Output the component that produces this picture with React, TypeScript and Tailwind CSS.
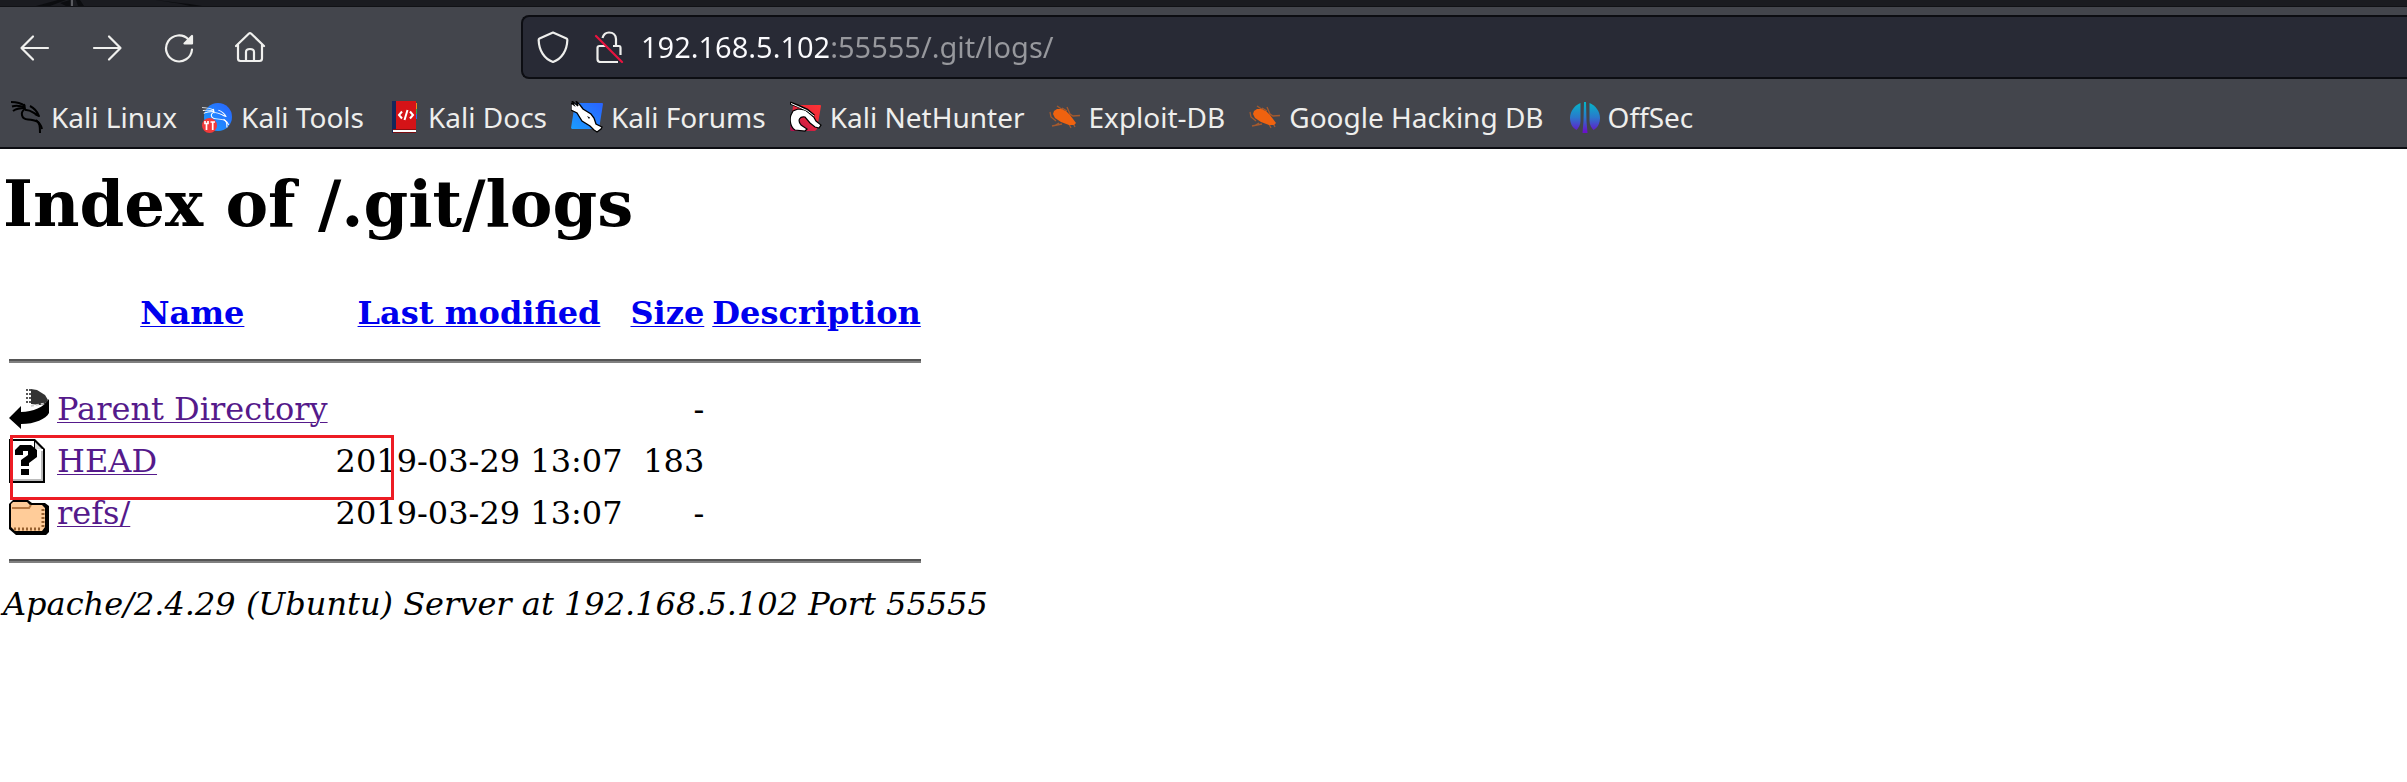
import type { ReactNode } from "react";

const DragonPaths = ({ width = 1.8 }: { width?: number }) => (
  <g fill="none" stroke="currentColor" strokeWidth={width} strokeLinejoin="round">
    <path d="M0 1 C6 1 10 2 14 5" />
    <path d="M1 5.500 C6 4 10 5 14 6.500" />
    <path d="M2 10 C6 7 9 7 14 7" />
    <path d="M13 3 L14 8 C9 11 10 18 17 18.500 C24 19 29 20 31 28" />
    <path d="M14 9 C19 8 22 12 27 14" />
    <path d="M19 5 C23 7 26 10 28 15 L24 13" />
    <path d="M25 19 C29 22 29 26 29 32" />
  </g>
);

const KaliLinuxIcon = () => (
  <svg viewBox="0 0 32 32" className="size-8 text-black" aria-hidden="true">
    <DragonPaths width={2} />
  </svg>
);

const KaliToolsIcon = () => (
  <svg viewBox="0 0 32 32" className="size-8 text-white" aria-hidden="true">
    <defs>
      <linearGradient id="tools" x1="0" y1="1" x2="1" y2="0">
        <stop offset="0" stopColor="#1aa0ff" />
        <stop offset="1" stopColor="#2a62ff" />
      </linearGradient>
    </defs>
    <circle cx="17" cy="16" r="14" fill="url(#tools)" />
    <g transform="translate(1 6) scale(0.86 0.64)">
      <DragonPaths width={1.3} />
    </g>
    <circle cx="8.500" cy="24.500" r="7.500" fill="#f23a3a" />
    <path d="M4 20v2.500h1.500V29M7 20v2.500H5.500M9.500 21H14M11.700 21v8" fill="none" stroke="#fff" strokeWidth="1.700" />
  </svg>
);

const KaliDocsIcon = () => (
  <svg viewBox="0 0 32 32" className="size-8" aria-hidden="true">
    <path d="M4 0h4v32H4z" fill="#14275a" />
    <path d="M8 0h20v28H8z" fill="#d51317" />
    <path d="M28 2h1v6h-1z" fill="#f08a1c" />
    <path d="M28 8h1v5h-1z" fill="#2fa84f" />
    <path d="M28 13h1v5h-1z" fill="#2b6be0" />
    <path d="M5 28h23v1H5z" fill="#8c0d10" />
    <path d="M5 29h23v2H5z" fill="#fff" />
    <path d="M5 31h23v1H5z" fill="#7d0c10" />
    <path d="M14 10.500 L11 14 L14 17.500 M22 10.500 L25 14 L22 17.500 M19.500 9 L16.500 19" fill="none" stroke="#fff" strokeWidth="2" />
  </svg>
);

const KaliForumsIcon = () => (
  <svg viewBox="0 0 32 32" className="size-8" aria-hidden="true">
    <defs>
      <linearGradient id="forums" x1="0" y1="1" x2="1" y2="0">
        <stop offset="0" stopColor="#1a9dff" />
        <stop offset="1" stopColor="#2a62ff" />
      </linearGradient>
    </defs>
    <path d="M4 2 H31 a1 1 0 0 1 1 1 L28 28 H1 L0 27 Z" fill="url(#forums)" />
    <path
      d="M0 2 L3 4 L1 0 L7 5 L5 0 L9 4 L12 8 L20 13 L23 17 L25 23 L31 26 L30 28 L26 31 L23 29 L19 25 L11 20 L6 12 L0 9 Z"
      fill="#fff"
      stroke="#000"
      strokeWidth="1.300"
    />
    <path d="M16 15 L19 16.500 L18 18 Z" fill="#000" />
  </svg>
);

const KaliNetHunterIcon = () => (
  <svg viewBox="0 0 32 32" className="size-8" aria-hidden="true">
    <defs>
      <linearGradient id="hunter" x1="0" y1="1" x2="1" y2="0">
        <stop offset="0" stopColor="#a8104e" />
        <stop offset="0.600" stopColor="#ee2a3a" />
        <stop offset="1" stopColor="#ff3333" />
      </linearGradient>
    </defs>
    <path d="M5 4 H30 a1 1 0 0 1 1 1 L27 28 L25 30 H1 L0 29 L3 5 Z" fill="url(#hunter)" />
    <path
      d="M5 29 C-1 25 0 16 1 14 L3 10 L8 8 L15 9 L22 13 L26 20 L31 24 L29 27 L25 26 L20 22 L15 16 C10 15 7 19 11 24 L17 28 L15 30 Z"
      fill="#fff"
      stroke="#000"
      strokeWidth="1.200"
    />
    <path d="M0 2 L8 5 L17 9 L24 15" fill="none" stroke="#000" strokeWidth="3" />
    <path d="M1 2.500 L8 5.500 L17 9.500 L24 15" fill="none" stroke="#fff" strokeWidth="1" />
  </svg>
);

const ExploitIcon = () => (
  <svg viewBox="0 0 32 32" className="size-8" aria-hidden="true">
    <path
      d="M8 5 L14 9 M13 7 L18 10 M18 6 L21 13 L24 15 L31 14.500 M1 11 L2 16 L7 20 M3 25 L13 23 M10 22 L5 25 M20 23 L22 27 M24 22 L26 26"
      fill="none"
      stroke="#a3592e"
      strokeWidth="1.300"
    />
    <path d="M5 10 L8 8 H12 L17 10 L21 14 L24 18 L27 22 L25 24 L20 24 L12 21 L6 17 L4 13 Z" fill="#f0620f" />
  </svg>
);

const OffSecIcon = () => (
  <svg viewBox="0 0 32 32" className="size-8" aria-hidden="true">
    <defs>
      <linearGradient id="offsec" gradientUnits="userSpaceOnUse" x1="0" y1="2" x2="0" y2="31">
        <stop offset="0" stopColor="#06b4c8" />
        <stop offset="0.500" stopColor="#2a78cc" />
        <stop offset="1" stopColor="#6a10cc" />
      </linearGradient>
    </defs>
    <g fill="url(#offsec)">
      <path d="M12.500 2 V20 C12.500 24 10.500 27 8.500 29 C4.500 27 2 22 2 17 C2 10 7 4 12.500 2 Z" />
      <path d="M21.500 2 V20 C21.500 24 23.500 27 25.500 29 C29.500 27 32 22 32 17 C32 10 27 4 21.500 2 Z" />
      <path d="M16 1 H18 L18.500 20 L19.500 32 H14.500 L15.500 20 Z" />
    </g>
  </svg>
);

const bookmarks: { label: string; icon: ReactNode }[] = [
  { label: "Kali Linux", icon: <KaliLinuxIcon /> },
  { label: "Kali Tools", icon: <KaliToolsIcon /> },
  { label: "Kali Docs", icon: <KaliDocsIcon /> },
  { label: "Kali Forums", icon: <KaliForumsIcon /> },
  { label: "Kali NetHunter", icon: <KaliNetHunterIcon /> },
  { label: "Exploit-DB", icon: <ExploitIcon /> },
  { label: "Google Hacking DB", icon: <ExploitIcon /> },
  { label: "OffSec", icon: <OffSecIcon /> },
];

const NavButton = ({ label, children }: { label: string; children: ReactNode }) => (
  <button type="button" aria-label={label} className="size-8 text-[#f0f0ee]">
    <svg
      viewBox="0 0 32 32"
      className="size-8"
      fill="none"
      stroke="currentColor"
      strokeWidth="2.200"
      strokeLinecap="round"
      strokeLinejoin="round"
      aria-hidden="true"
    >
      {children}
    </svg>
  </button>
);

const BackArrowIcon = () => (
  <svg viewBox="0 0 40 44" className="block h-11 w-10" role="img" aria-label="[PARENTDIR]">
    <path d="M22 2 L28 3 L36 8 L39 13 L37 17 L31 18 L22 17 Z" fill="#333" />
    <path d="M17 3 H23 M17 7 H23 M17 11 H23 M17 15 H23" stroke="#555" strokeWidth="2" strokeDasharray="2 1" />
    <path d="M22 19 L37 16" stroke="#ccc" strokeWidth="1.500" strokeDasharray="3 2" />
    <path d="M0 31 L12 19 V25 C24 25 35 20 40 12 V26 C37 32 26 37 12 37 V42 Z" fill="#000" />
  </svg>
);

const UnknownFileIcon = () => (
  <svg viewBox="0 0 40 44" className="block h-11 w-10" role="img" aria-label="[   ]">
    <path d="M0 0 H26 L36 10 V44 H0 Z" fill="#000" />
    <path d="M2 2 H25 V10 H34 V42 H2 Z" fill="#fff" />
    <path d="M2 41 H33 V12" fill="none" stroke="#bbb" strokeWidth="2" />
    <path d="M26 3 L33 10 H26 Z" fill="#ddd" />
    <path
      d="M6 16 V11 L11 6 H22 L28 11 V18 L20 24 V27 H12 V21 L19 16 V12 H14 V16 Z M12 30 H20 V36 H12 Z"
      fill="#000"
    />
  </svg>
);

const FolderIcon = () => (
  <svg viewBox="0 0 40 44" className="block h-11 w-10" role="img" aria-label="[DIR]">
    <path d="M2 11 L4 9 H19 L23 12 H36 L40 15 V41 L37 44 H7 L0 38 V13 Z" fill="#000" />
    <path d="M4 11 H18 L21 14 H33 L36 17 V36 L33 40 H6 L2 36 V13 Z" fill="#fc9" />
    <path d="M3 17 H20 L22 14" fill="none" stroke="#b97a43" strokeWidth="2" />
    <path d="M5 38 H32" stroke="#96602f" strokeWidth="3" strokeDasharray="2 2" />
    <path d="M34 18 V36" stroke="#96602f" strokeWidth="3" strokeDasharray="2 2" />
  </svg>
);

const rows: { name: string; modified: string; size: string; icon: ReactNode }[] = [
  { name: "Parent Directory", modified: "", size: "-", icon: <BackArrowIcon /> },
  { name: "HEAD", modified: "2019-03-29 13:07", size: "183", icon: <UnknownFileIcon /> },
  { name: "refs/", modified: "2019-03-29 13:07", size: "-", icon: <FolderIcon /> },
];

const columns = ["Name", "Last modified", "Size", "Description"];

const Rule = () => (
  <tr>
    <td colSpan={5} className="p-0.5">
      <hr className="my-4 h-1 border-t-2 border-b-2 border-t-[#555555] border-b-[#808080]" />
    </td>
  </tr>
);

const linkBase = "underline decoration-1 underline-offset-2";

export default function App() {
  return (
    <div className="min-h-screen overflow-hidden bg-white">
      <header className="border-b-2 border-[#0c0d12] bg-[#43454c] font-['Noto_Sans',sans-serif] text-[#eeeeec]">
        <div className="h-[7px] border-b border-[#101115] bg-[#1a1b20]">
          <svg viewBox="0 0 220 6" className="block h-[6px] w-[220px]" aria-hidden="true">
            <path d="M36 6 L58 0 H66 L50 6 Z M60 3 L70 0 V6 H66 Z M76 0 H80 L84 6 H78 Z M155 0 C170 2 185 3 202 6 H190 C178 3 168 2 155 0 Z" fill="#0c0d10" />
            <path d="M71 0 H73 V6 H71 Z" fill="#5a5b60" />
          </svg>
        </div>
        <div className="flex items-center pt-2 pl-[19px]">
          <nav className="flex gap-10" aria-label="Navigation">
            <NavButton label="Back">
              <path d="M29 17 H3 M14 5.500 L2.500 17 L14 28.500" />
            </NavButton>
            <NavButton label="Forward">
              <path d="M3 17 H29 M18 5.500 L29.500 17 L18 28.500" />
            </NavButton>
            <NavButton label="Reload">
              <path d="M29 18.500 A13 13 0 1 1 25.500 8.500" />
              <path d="M29 5 V12.500 H21.500 Z" fill="currentColor" />
            </NavButton>
            <NavButton label="Home">
              <path d="M1 15 L14 2.500 Q15 1.500 16 2.500 L29 15 M3 14 V27.500 Q3 30 5.500 30 H24.500 Q27 30 27 27.500 V14 M11 30 V21 Q11 18 15 18 Q19 18 19 21 V30" />
            </NavButton>
          </nav>
          <div className="ml-[254px] flex h-16 flex-1 items-center rounded-l-lg border-2 border-r-0 border-[#0c0d12] bg-[#282a35] pl-3.5">
            <svg viewBox="0 0 32 32" className="size-8 shrink-0" fill="none" stroke="#eeeeec" strokeWidth="2.200" strokeLinejoin="round" aria-hidden="true">
              <path d="M16 1.500 L29.500 7.500 Q30.500 8 30.300 9.500 C30 19 25 28 16 31 C7 28 2 19 1.700 9.500 Q1.500 8 2.500 7.500 Z" />
            </svg>
            <svg viewBox="0 0 32 32" className="ml-6 size-8 shrink-0" fill="none" stroke="#eeeeec" strokeWidth="2.200" aria-hidden="true">
              <path d="M9.500 7 Q11 1.500 16 1.500 Q22.500 1.500 23 8 V15 H26 Q27.500 15 27.500 17 V24 M20 15 H23 M13 15 H6.500 Q4.500 15 4.500 17 V28 Q4.500 31 7.500 31 H25" />
              <path d="M3 5 L29 31" stroke="#e8143f" strokeLinecap="round" />
            </svg>
            <input
              type="text"
              aria-label="Address"
              defaultValue="192.168.5.102:55555/.git/logs/"
              className="ml-4 min-w-0 flex-1 bg-[linear-gradient(to_right,#fbfbfe_190px,#97989d_190px)] bg-clip-text text-[29px] text-transparent caret-white outline-none"
            />
          </div>
        </div>
        <nav className="flex h-[68px] items-center gap-6 pt-2 pl-[11px]" aria-label="Bookmarks">
          {bookmarks.map((item) => (
            <a key={item.label} href="#" className="flex shrink-0 items-center gap-2 text-[28px] leading-9 whitespace-nowrap">
              {item.icon}
              {item.label}
            </a>
          ))}
        </nav>
      </header>

      <main className="relative px-[3px] pt-[18px] font-['DejaVu_Serif',serif] text-[32px] leading-[38px] text-black">
        <h1 className="mb-11 text-[64px] leading-[74px] font-bold">Index of /.git/logs</h1>
        <table className="border-separate border-spacing-1">
          <thead>
            <tr className="h-12">
              <th className="p-0.5" aria-label="Type">
                <div className="h-11 w-10" />
              </th>
              {columns.map((name) => (
                <th key={name} className="p-0.5 text-center font-bold">
                  <a href="#" className={`${linkBase} text-[#0000ee]`}>
                    {name}
                  </a>
                </th>
              ))}
            </tr>
          </thead>
          <tbody>
            <Rule />
            {rows.map((row) => (
              <tr key={row.name}>
                <td className="p-0.5 align-top">{row.icon}</td>
                <td className="p-0.5">
                  <a href="#" className={`${linkBase} text-[#551a8b]`}>
                    {row.name}
                  </a>
                </td>
                <td className="p-0.5 text-right whitespace-nowrap">{row.modified}</td>
                <td className="p-0.5 text-right">{row.size}</td>
                <td className="p-0.5" />
              </tr>
            ))}
            <Rule />
          </tbody>
        </table>
        <address className="italic">Apache/2.4.29 (Ubuntu) Server at 192.168.5.102 Port 55555</address>
        <div className="pointer-events-none absolute top-[286px] left-[10px] h-[65px] w-[384px] border-3 border-[#ed1c24]" />
      </main>
    </div>
  );
}
